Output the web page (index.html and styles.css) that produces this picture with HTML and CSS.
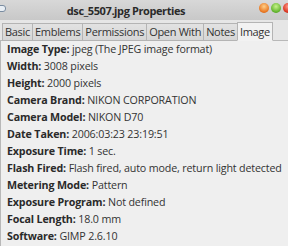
FILE: index.html
```html
<!DOCTYPE html>
<html lang="en">
<head>
  <meta charset="UTF-8" />
  <title>dsc_5507.jpg Properties</title>
  <link rel="stylesheet" href="styles.css">
</head>
<body>
  <div class="titlebar">
    <span class="menu-btn"></span>
    <span class="title">dsc_5507.jpg Properties</span>
    <span class="buttons">
      <span class="btn btn-min"></span>
      <span class="btn btn-max"></span>
      <span class="btn btn-close"></span>
    </span>
  </div>

  <div class="tabs">
    <span class="tab">Basic</span>
    <span class="tab">Emblems</span>
    <span class="tab">Permissions</span>
    <span class="tab">Open With</span>
    <span class="tab">Notes</span>
    <span class="tab active">Image</span>
  </div>

  <div class="page">
    <p><b>Image Type:</b> jpeg (The JPEG image format)</p>
    <p><b>Width:</b> 3008 pixels</p>
    <p><b>Height:</b> 2000 pixels</p>
    <p><b>Camera Brand:</b> NIKON CORPORATION</p>
    <p><b>Camera Model:</b> NIKON D70</p>
    <p><b>Date Taken:</b> 2006:03:23 23:19:51</p>
    <p><b>Exposure Time:</b> 1 sec.</p>
    <p><b>Flash Fired:</b> Flash fired, auto mode, return light detected</p>
    <p><b>Metering Mode:</b> Pattern</p>
    <p><b>Exposure Program:</b> Not defined</p>
    <p><b>Focal Length:</b> 18.0 mm</p>
    <p><b>Software:</b> GIMP 2.6.10</p>
  </div>
</body>
</html>
```

FILE: styles.css
```css
body {
  margin: 0;
  width: 288px;
  height: 246px;
  overflow: hidden;
  font-family: "Open Sans", sans-serif;
  font-size: 10.7px;
  letter-spacing: -0.15px;
  color: #333;
  background-color: #efefef;
}
.titlebar {
  position: relative;
  height: 20px;
  background: linear-gradient(#d8d8d8, #c8c8c8);
  display: flex;
  align-items: center;
  justify-content: center;
}
.menu-btn {
  position: absolute;
  left: -3px;
  top: 5px;
  width: 7px;
  height: 5px;
  border-radius: 3px;
  border: 1px solid #7a8ca0;
  background: #e8eef4;
}
.title {
  font-weight: bold;
  font-size: 11px;
  letter-spacing: -0.4px;
  color: #2a2a2a;
  margin-right: 36px;
}
.buttons {
  position: absolute;
  right: -5px;
  top: 3px;
  display: flex;
  gap: 2px;
}
.btn {
  width: 10px;
  height: 10px;
  border-radius: 50%;
}
.btn-min { background: radial-gradient(circle at 50% 35%, #ffd08a, #e8731c 70%, #a9440c); }
.btn-max { background: radial-gradient(circle at 50% 35%, #c8f28a, #5fb22a 70%, #3a7a12); }
.btn-close { background: radial-gradient(circle at 50% 35%, #ff9a8a, #d8301c 70%, #90180c); }
.tabs {
  display: flex;
  align-items: flex-end;
  height: 20px;
  padding: 0 0 0 2px;
  background: #e6e6e6;
  border-bottom: 1px solid #b8b8b8;
}
.tab {
  height: 16px;
  line-height: 16px;
  padding: 0 2px;
  margin-bottom: -1px;
  font-size: 11px;
  letter-spacing: -0.3px;
  border: 1px solid #b4b4b4;
  border-right: none;
  background: linear-gradient(#e2e2e2, #d6d6d6);
}
.tab.active {
  height: 17px;
  line-height: 18px;
  background: #f2f2f2;
  border-right: 1px solid #b4b4b4;
  border-bottom-color: #f2f2f2;
}
.page {
  padding: 0 0 0 6px;
  border-left: 1px solid #b8b8b8;
  height: 205px;
}
.page p {
  margin: 0;
  height: 17px;
  line-height: 17px;
  white-space: nowrap;
}
.page b {
  color: #2a2a2a;
}
```
